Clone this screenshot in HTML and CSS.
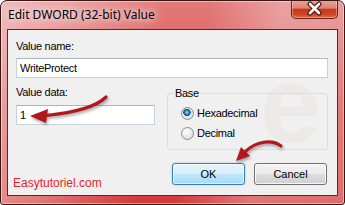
FILE: index.html
```html
<!DOCTYPE html>
<html>
<head>
<meta charset="utf-8">
<link rel="stylesheet" href="styles.css">
</head>
<body>
<div class="window">
  <div class="titlebar">
    <span class="title">Edit DWORD (32-bit) Value</span>
    <div class="close">
      <svg width="47" height="19" viewBox="0 0 47 19">
        <path d="M19,5 L28,14 M28,5 L19,14" stroke="#4a1a14" stroke-width="5" stroke-linecap="round"/>
        <path d="M19,5 L28,14 M28,5 L19,14" stroke="#ffffff" stroke-width="2.6" stroke-linecap="round"/>
      </svg>
    </div>
  </div>
  <div class="client">
    <div class="watermark">e</div>
    <div class="lbl">Value name:</div>
    <div class="input wide">WriteProtect</div>
    <div class="mid">
      <div class="col">
        <div class="lbl">Value data:</div>
        <div class="input narrow">1</div>
      </div>
      <fieldset class="group">
        <legend>Base</legend>
        <div class="radio-row"><span class="radio checked"></span>Hexadecimal</div>
        <div class="radio-row"><span class="radio"></span>Decimal</div>
      </fieldset>
    </div>
    <div class="bottom">
      <span class="brand">Easytutoriel.com</span>
      <div class="buttons">
        <div class="btn default">OK</div>
        <div class="btn">Cancel</div>
      </div>
    </div>
  </div>
  <svg class="arrows" width="345" height="205" viewBox="0 0 345 205">
    <path d="M106,97 C97,106 80,112 46,115.5" fill="none" stroke="#b3171c" stroke-width="3.2" stroke-linecap="round"/>
    <polygon points="30,116 48,109 46,123" fill="#b3171c"/>
    <path d="M281,146 C272,139 256,141 245,152" fill="none" stroke="#b3171c" stroke-width="3.2" stroke-linecap="round"/>
    <polygon points="236,161 241,147 250,156" fill="#b3171c"/>
  </svg>
</div>
</body>
</html>
```
FILE: styles.css
```css
html, body {
  margin: 0;
  padding: 0;
  background: #ffffff;
}

.window {
  position: relative;
  box-sizing: border-box;
  width: 345px;
  height: 205px;
  border: 1px solid #3b1414;
  border-radius: 7px 7px 3px 3px;
  padding: 0 6px 8px 6px;
  display: flex;
  flex-direction: column;
  overflow: hidden;
  background:
    linear-gradient(100deg, rgba(255,255,255,.5) 0%, rgba(255,255,255,.3) 20%, rgba(255,255,255,0) 45%, rgba(255,255,255,0) 55%, rgba(255,255,255,.3) 75%, rgba(255,255,255,.25) 100%),
    linear-gradient(#e27a7a, #d84a4a 55%, #d43a3a);
  box-shadow: inset 0 0 0 1px rgba(255,255,255,.45);
}

.titlebar {
  height: 28px;
  display: flex;
  justify-content: space-between;
  align-items: flex-start;
}

.title {
  padding: 6px 0 0 1px;
  font-family: "Noto Sans", sans-serif;
  font-size: 12px;
  line-height: 16px;
  color: #000;
  text-shadow: 0 0 6px rgba(255,255,255,.9), 0 0 10px rgba(255,255,255,.7);
}

.close {
  width: 47px;
  height: 19px;
  margin-top: -1px;
  box-sizing: border-box;
  border: 1px solid #6b2014;
  border-top: none;
  border-radius: 0 0 5px 5px;
  background: linear-gradient(#eba59b 0%, #df8272 45%, #c8391c 52%, #cf4526 80%, #de6a4e 100%);
  box-shadow: inset 0 0 0 1px rgba(255,255,255,.35);
}

.close svg {
  display: block;
  margin: -1px 0 0 -1px;
}

.client {
  position: relative;
  flex: 1;
  background: #f0f0f0;
  border: 1px solid #5c2626;
  padding: 10px 9px 0 8px;
  display: flex;
  flex-direction: column;
  font-family: "Liberation Sans", Arial, sans-serif;
  font-size: 11px;
  letter-spacing: -0.3px;
  color: #000;
}

.watermark {
  position: absolute;
  left: 252px;
  top: 19px;
  font-family: "Liberation Sans", Arial, sans-serif;
  font-weight: bold;
  font-size: 110px;
  line-height: 110px;
  letter-spacing: 0;
  color: rgba(200, 140, 140, 0.07);
}

.lbl {
  position: relative;
  line-height: 13px;
  height: 13px;
}

.input {
  position: relative;
  box-sizing: border-box;
  height: 20px;
  margin-top: 5px;
  border: 1px solid #c5d2de;
  border-top-color: #a9b6c2;
  background: #ffffff;
  padding: 0 3px;
  line-height: 18px;
}

.input.wide {
  width: 312px;
}

.mid {
  display: flex;
  align-items: flex-start;
  margin-top: 8px;
}

.col {
  width: 139px;
}

.col .input {
  margin-top: 6px;
}

.group {
  position: relative;
  flex: 1;
  margin: 1px 0 0 12px;
  padding: 3px 0 6px 0;
  border: 1px solid #d5dfe5;
  border-radius: 3px;
  min-width: 0;
}

.group legend {
  margin-left: 5px;
  padding: 0 2px;
  line-height: 13px;
}

.radio-row {
  display: flex;
  align-items: center;
  height: 20px;
  padding-left: 13px;
}

.radio {
  box-sizing: border-box;
  width: 13px;
  height: 13px;
  border-radius: 50%;
  border: 1px solid #8c8f92;
  margin-right: 3px;
  background: radial-gradient(circle at 40% 35%, #ffffff 0%, #ececec 45%, #cfcfcf 100%);
}

.radio.checked {
  background:
    radial-gradient(circle at 45% 40%, #a8e8ff 0px, #3a9ad8 1.5px, #0e4f86 3.5px, rgba(14,79,134,0) 4px),
    radial-gradient(circle at 40% 35%, #ffffff 0%, #ececec 45%, #cfcfcf 100%);
}

.bottom {
  display: flex;
  justify-content: space-between;
  align-items: flex-start;
  margin-top: 13px;
}

.brand {
  margin: 13px 0 0 -3px;
  font-family: "Liberation Sans", Arial, sans-serif;
  font-size: 12px;
  line-height: 15px;
  letter-spacing: 0;
  color: #e3242b;
}

.buttons {
  display: flex;
  gap: 9px;
  margin-right: 1px;
}

.btn {
  box-sizing: border-box;
  width: 73px;
  height: 22px;
  border: 1px solid #707070;
  border-radius: 3px;
  background: linear-gradient(#f2f2f2 0%, #ebebeb 48%, #dddddd 52%, #cfcfcf 100%);
  box-shadow: inset 0 0 0 1px rgba(255,255,255,.8);
  text-align: center;
  line-height: 20px;
  letter-spacing: 0;
}

.btn.default {
  border-color: #3c7fb1;
  background: linear-gradient(#e5f4fc 0%, #d9eefa 48%, #bee6fd 52%, #a7d9f5 100%);
  box-shadow: inset 0 0 0 1px rgba(255,255,255,.6), 0 0 2px rgba(60,160,230,.5);
}

.arrows {
  position: absolute;
  left: -1px;
  top: -1px;
  pointer-events: none;
  filter: drop-shadow(1px 2px 1.5px rgba(0,0,0,.35));
}
```
